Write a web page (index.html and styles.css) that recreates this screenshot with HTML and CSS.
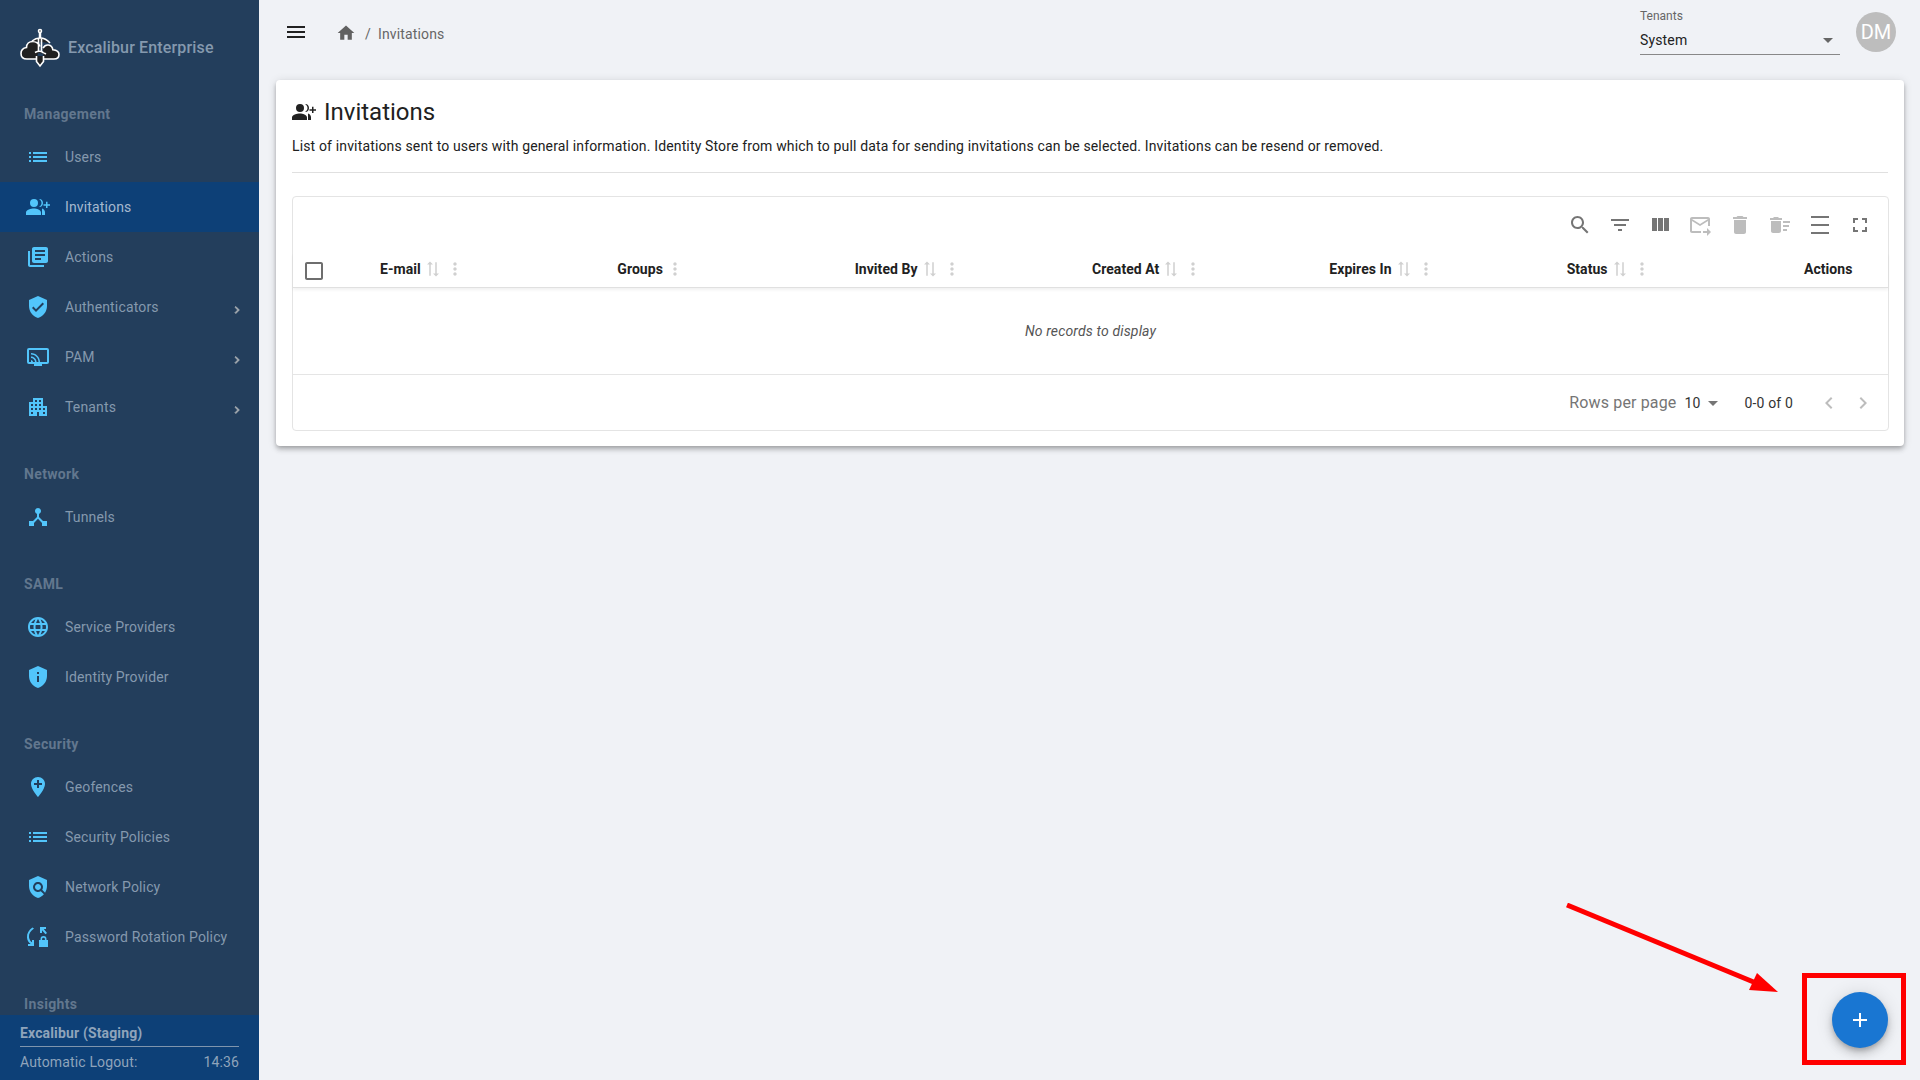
FILE: index.html
```html
<!DOCTYPE html>
<html lang="en">
<head>
<meta charset="utf-8">
<title>Invitations</title>
<link rel="stylesheet" href="styles.css">
</head>
<body>
<svg class="defs" aria-hidden="true">
<symbol id="i-list" viewBox="0 0 24 24"><path d="M3 13h2v-2H3v2zm0 4h2v-2H3v2zm0-8h2V7H3v2zm4 4h14v-2H7v2zm0 4h14v-2H7v2zM7 7v2h14V7H7z"/></symbol>
<symbol id="i-invite" viewBox="0 0 24 24"><path d="M8 12a4 4 0 1 0 0-8 4 4 0 0 0 0 8zm0 1.500c-3 0-8 1.300-8 4V20h15v-2.500c0-2.700-4.500-4-7-4zM13 4c1.500 1 2.500 2.400 2.500 4s-1 3-2.500 4c2.500.3 4-1.700 4-4s-1.500-4.300-4-4zM16 13.500c1.800.5 3 2 3 4V20h-3v-6.500zM20 13v-2.300h-2.500V9.200H20V6.800h1.500v2.400H24v1.500h-2.500V13z"/></symbol>
<symbol id="i-books" viewBox="0 0 24 24"><path d="M4 6H2v14c0 1.100.9 2 2 2h14v-2H4V6zm16-4H8c-1.100 0-2 .9-2 2v12c0 1.100.9 2 2 2h12c1.100 0 2-.9 2-2V4c0-1.100-.9-2-2-2zm-1 9H9V9h10v2zm-4 4H9v-2h6v2zm4-8H9V5h10v2z"/></symbol>
<symbol id="i-verified" viewBox="0 0 24 24"><path d="M12 1L3 5v6c0 5.550 3.840 10.740 9 12 5.160-1.260 9-6.450 9-12V5l-9-4zm-2 16l-4-4 1.410-1.410L10 14.170l6.590-6.590L18 9l-8 8z"/></symbol>
<symbol id="i-cast" viewBox="0 0 24 24"><path fill-rule="evenodd" d="M3 3h18a2 2 0 0 1 2 2v12a2 2 0 0 1-2 2H3a2 2 0 0 1-2-2V5a2 2 0 0 1 2-2zm0 2v12h18V5H3z"/><path d="M8 19h8v2H8zM5 17v-2c1 0 2 1 2 2H5zM5 13v-1.600c3 0 5.600 2.600 5.600 5.600H9c0-2.200-1.800-4-4-4zM5 9.500V8c5 0 9 4 9 9h-1.500c0-4.100-3.400-7.500-7.500-7.500z"/></symbol>
<symbol id="i-apt" viewBox="0 0 24 24"><path d="M17 11V3H7v4H3v14h8v-4h2v4h8V11h-4zM7 19H5v-2h2v2zm0-4H5v-2h2v2zm0-4H5V9h2v2zm4 4H9v-2h2v2zm0-4H9V9h2v2zm0-4H9V5h2v2zm4 8h-2v-2h2v2zm0-4h-2V9h2v2zm0-4h-2V5h2v2zm4 12h-2v-2h2v2zm0-4h-2v-2h2v2z"/></symbol>
<symbol id="i-hub" viewBox="0 0 24 24"><path d="M17 16l-4-4V8.820C14.160 8.400 15 7.300 15 6c0-1.660-1.340-3-3-3S9 4.340 9 6c0 1.300.84 2.400 2 2.820V12l-4 4H3v5h5v-3.050l4-4.200 4 4.200V21h5v-5h-4z"/></symbol>
<symbol id="i-globe" viewBox="0 0 24 24"><path d="M11.990 2C6.470 2 2 6.480 2 12s4.470 10 9.990 10C17.520 22 22 17.520 22 12S17.520 2 11.990 2zm6.930 6h-2.950c-.32-1.250-.78-2.450-1.380-3.560 1.840.63 3.370 1.910 4.330 3.560zM12 4.040c.83 1.200 1.480 2.530 1.910 3.960h-3.820c.43-1.430 1.080-2.760 1.910-3.960zM4.260 14C4.100 13.360 4 12.690 4 12s.1-1.360.26-2h3.380c-.08.66-.14 1.320-.14 2 0 .68.06 1.340.14 2H4.260zm.82 2h2.950c.32 1.250.78 2.450 1.380 3.560-1.840-.63-3.370-1.900-4.330-3.560zm2.950-8H5.080c.96-1.660 2.490-2.930 4.330-3.560C8.810 5.550 8.350 6.750 8.030 8zM12 19.960c-.83-1.200-1.480-2.530-1.910-3.960h3.820c-.43 1.430-1.080 2.760-1.910 3.960zM14.340 14H9.660c-.09-.66-.16-1.320-.16-2 0-.68.07-1.350.16-2h4.680c.09.65.16 1.320.16 2 0 .68-.07 1.340-.16 2zm.25 5.560c.6-1.110 1.060-2.310 1.380-3.560h2.950c-.96 1.650-2.490 2.930-4.330 3.560zM16.360 14c.08-.66.14-1.320.14-2 0-.68-.06-1.340-.14-2h3.380c.16.64.26 1.310.26 2s-.1 1.360-.26 2h-3.380z"/></symbol>
<symbol id="i-shield-info" viewBox="0 0 24 24"><path fill-rule="evenodd" d="M12 1L3 5v6c0 5.550 3.840 10.740 9 12 5.160-1.260 9-6.450 9-12V5l-9-4zm-1 6h2v2h-2V7zm0 4h2v6h-2v-6z"/></symbol>
<symbol id="i-addloc" viewBox="0 0 24 24"><path d="M12 2C8.140 2 5 5.140 5 9c0 5.250 7 13 7 13s7-7.750 7-13c0-3.860-3.140-7-7-7zm4 8h-3v3h-2v-3H8V8h3V5h2v3h3v2z"/></symbol>
<symbol id="i-policy" viewBox="0 0 24 24"><path d="M21 5l-9-4-9 4v6c0 5.550 3.840 10.740 9 12 2.300-.56 4.330-1.900 5.880-3.710l-3.120-3.120c-1.940 1.290-4.580 1.070-6.290-.64-1.950-1.950-1.950-5.120 0-7.070 1.950-1.950 5.120-1.950 7.070 0 1.710 1.710 1.920 4.350.64 6.290l2.900 2.900C20.290 15.690 21 13.380 21 11V5z"/><path d="M12 15c1.660 0 3-1.340 3-3s-1.340-3-3-3-3 1.340-3 3 1.340 3 3 3z"/></symbol>
<symbol id="i-rotate" viewBox="0 0 24 24"><path d="M8 3.500C4.500 6 2.600 8.800 3 12.200c.3 2.300 1.500 4 3 5.100V15h2v6H2v-2h2.700C2.500 17.300 1.200 15 1 12.400.7 8.400 2.800 5 6.400 2.500zM14 2h6v2h-2.200l3.200 4-1.500 1.200L16 5.300V8h-2zM17.500 11a3 3 0 0 1 3 3v1h1.500v7h-9v-7h1.500v-1a3 3 0 0 1 3-3zm0 1.700a1.400 1.400 0 0 0-1.400 1.400V15h2.800v-.9a1.400 1.400 0 0 0-1.400-1.400z"/></symbol>
<symbol id="i-chev" viewBox="0 0 24 24"><path d="M8.590 16.590L13.170 12 8.590 7.410 10 6l6 6-6 6z"/></symbol>
<symbol id="i-chev-l" viewBox="0 0 24 24"><path d="M15.410 7.410L14 6l-6 6 6 6 1.410-1.410L10.830 12z"/></symbol>
<symbol id="i-menu" viewBox="0 0 24 24"><path d="M3 18h18v-2H3v2zm0-5h18v-2H3v2zm0-7v2h18V6H3z"/></symbol>
<symbol id="i-home" viewBox="0 0 24 24"><path d="M10 20v-6h4v6h5v-8h3L12 3 2 12h3v8z"/></symbol>
<symbol id="i-drop" viewBox="0 0 24 24"><path d="M7 10l5 5 5-5z"/></symbol>
<symbol id="i-search" viewBox="0 0 24 24"><path d="M15.500 14h-.79l-.28-.27C15.410 12.590 16 11.110 16 9.500 16 5.910 13.090 3 9.500 3S3 5.910 3 9.500 5.910 16 9.500 16c1.610 0 3.090-.59 4.230-1.570l.27.28v.79l5 4.990L20.490 19l-4.990-5zm-6 0C7.010 14 5 11.990 5 9.500S7.010 5 9.500 5 14 7.010 14 9.500 11.990 14 9.500 14z"/></symbol>
<symbol id="i-filter" viewBox="0 0 24 24"><path d="M10 18h4v-2h-4v2zM3 6v2h18V6H3zm3 7h12v-2H6v2z"/></symbol>
<symbol id="i-cols" viewBox="0 0 24 24"><path d="M10 18h5V5h-5v13zm-6 0h5V5H4v13zM16 5v13h5V5h-5z"/></symbol>
<symbol id="i-mail" viewBox="0 0 24 24"><path d="M20 4H4c-1.100 0-2 .9-2 2v12c0 1.100.9 2 2 2h9v-2H4V8l8 5 8-5v5h2V6c0-1.100-.9-2-2-2zm-8 7L4 6h16l-8 5zm7 4l4 4-4 4v-3h-4v-2h4v-3z"/></symbol>
<symbol id="i-trash" viewBox="0 0 24 24"><path d="M6 19c0 1.100.9 2 2 2h8c1.100 0 2-.9 2-2V7H6v12zM19 4h-3.500l-1-1h-5l-1 1H5v2h14V4z"/></symbol>
<symbol id="i-sweep" viewBox="0 0 24 24"><path d="M15 16h4v2h-4zm0-8h7v2h-7zm0 4h6v2h-6zM3 18c0 1.100.9 2 2 2h6c1.100 0 2-.9 2-2V8H3v10zM14 5h-3l-1-1H6L5 5H2v2h12z"/></symbol>
<symbol id="i-density" viewBox="0 0 24 24"><path d="M3 3h18v2H3zM3 19h18v2H3zM3 11h18v2H3z"/></symbol>
<symbol id="i-full" viewBox="0 0 24 24"><path d="M7 14H5v5h5v-2H7v-3zm-2-4h2V7h3V5H5v5zm12 7h-3v2h5v-5h-2v3zM14 5v2h3v3h2V5h-5z"/></symbol>
<symbol id="i-sort" viewBox="0 0 24 24"><path d="M8 2L4 6h3v15h2V6h3L8 2zM16 22l4-4h-3V3h-2v15h-3l4 4z"/></symbol>
<symbol id="i-more" viewBox="0 0 24 24"><path d="M12 8c1.100 0 2-.9 2-2s-.9-2-2-2-2 .9-2 2 .9 2 2 2zm0 2c-1.100 0-2 .9-2 2s.9 2 2 2 2-.9 2-2-.9-2-2-2zm0 6c-1.100 0-2 .9-2 2s.9 2 2 2 2-.9 2-2-.9-2-2-2z"/></symbol>
<symbol id="i-box" viewBox="0 0 24 24"><path d="M19 5v14H5V5h14m0-2H5c-1.100 0-2 .9-2 2v14c0 1.100.9 2 2 2h14c1.100 0 2-.9 2-2V5c0-1.100-.9-2-2-2z"/></symbol>
<symbol id="i-add" viewBox="0 0 24 24"><path d="M19 13h-6v6h-2v-6H5v-2h6V5h2v6h6v2z"/></symbol>
</svg>

<div class="app">
  <aside class="sidebar">
    <div class="brand">
      <svg class="logo" viewBox="0 0 40 40" fill="none" stroke="#fff" stroke-width="1.600">
        <path d="M20 18.500c-1.500-3.500-4.500-5-7-5-4 0-6.500 2.500-6.500 6C3 20 1 22.500 1 25.500 1 29 3.500 31 7 31h9.500"/>
        <path d="M23 20c1.500-2.500 3.500-3.300 5.500-3 2.500.4 4 2.400 4.300 4.700 3.500.3 6.200 2.100 6.200 4.800 0 2.800-2.200 4.500-5 4.500H23.500"/>
        <path d="M16.500 28v5.500L20 38l3.500-4.500V28"/>
        <path d="M18.500 10v14M21.500 10v14M12 13c2.500-2 5-3 8-3s7 1.500 10 5"/>
        <path d="M15 24.500c3-1.500 6-1.500 8 0 1 .8 2 1 3 1.500"/>
        <circle cx="20" cy="3" r="1.500"/>
        <path d="M20 4.500V10" stroke-width="2.500"/>
      </svg>
      <span class="brand-name">Excalibur Enterprise</span>
    </div>
    <nav class="nav">
      <h3 class="nav-head">Management</h3>
      <a class="nav-item"><svg class="nav-ico"><use href="#i-list"/></svg><span>Users</span></a>
      <a class="nav-item active"><svg class="nav-ico"><use href="#i-invite"/></svg><span>Invitations</span></a>
      <a class="nav-item"><svg class="nav-ico"><use href="#i-books"/></svg><span>Actions</span></a>
      <a class="nav-item"><svg class="nav-ico"><use href="#i-verified"/></svg><span>Authenticators</span><svg class="nav-chev"><use href="#i-chev"/></svg></a>
      <a class="nav-item"><svg class="nav-ico"><use href="#i-cast"/></svg><span>PAM</span><svg class="nav-chev"><use href="#i-chev"/></svg></a>
      <a class="nav-item"><svg class="nav-ico"><use href="#i-apt"/></svg><span>Tenants</span><svg class="nav-chev"><use href="#i-chev"/></svg></a>
      <h3 class="nav-head">Network</h3>
      <a class="nav-item"><svg class="nav-ico"><use href="#i-hub"/></svg><span>Tunnels</span></a>
      <h3 class="nav-head">SAML</h3>
      <a class="nav-item"><svg class="nav-ico"><use href="#i-globe"/></svg><span>Service Providers</span></a>
      <a class="nav-item"><svg class="nav-ico"><use href="#i-shield-info"/></svg><span>Identity Provider</span></a>
      <h3 class="nav-head">Security</h3>
      <a class="nav-item"><svg class="nav-ico"><use href="#i-addloc"/></svg><span>Geofences</span></a>
      <a class="nav-item"><svg class="nav-ico"><use href="#i-list"/></svg><span>Security Policies</span></a>
      <a class="nav-item"><svg class="nav-ico"><use href="#i-policy"/></svg><span>Network Policy</span></a>
      <a class="nav-item"><svg class="nav-ico"><use href="#i-rotate"/></svg><span>Password Rotation Policy</span></a>
      <h3 class="nav-head nav-head-last">Insights</h3>
    </nav>
    <footer class="side-foot">
      <div class="foot-name">Excalibur (Staging)</div>
      <div class="foot-row"><span>Automatic Logout:</span><span>14:36</span></div>
    </footer>
  </aside>

  <main class="main">
    <header class="topbar">
      <svg class="burger"><use href="#i-menu"/></svg>
      <div class="crumbs">
        <svg class="home"><use href="#i-home"/></svg>
        <span class="sep">/</span>
        <span>Invitations</span>
      </div>
      <div class="tenant">
        <label class="tenant-label">Tenants</label>
        <div class="tenant-val"><span>System</span><svg class="tenant-drop"><use href="#i-drop"/></svg></div>
      </div>
      <div class="avatar">DM</div>
    </header>

    <section class="card">
      <h1 class="title"><svg class="title-ico"><use href="#i-invite"/></svg>Invitations</h1>
      <p class="desc">List of invitations sent to users with general information. Identity Store from which to pull data for sending invitations can be selected. Invitations can be resend or removed.</p>
      <hr class="rule">
      <div class="table">
        <div class="toolbar">
          <svg class="tool"><use href="#i-search"/></svg>
          <svg class="tool"><use href="#i-filter"/></svg>
          <svg class="tool"><use href="#i-cols"/></svg>
          <svg class="tool off"><use href="#i-mail"/></svg>
          <svg class="tool off"><use href="#i-trash"/></svg>
          <svg class="tool off"><use href="#i-sweep"/></svg>
          <svg class="tool"><use href="#i-density"/></svg>
          <svg class="tool"><use href="#i-full"/></svg>
        </div>
        <div class="thead">
          <div class="th"><svg class="check"><use href="#i-box"/></svg></div>
          <div class="th">E-mail<svg class="sort"><use href="#i-sort"/></svg><svg class="more"><use href="#i-more"/></svg></div>
          <div class="th">Groups<svg class="more no-sort"><use href="#i-more"/></svg></div>
          <div class="th">Invited By<svg class="sort"><use href="#i-sort"/></svg><svg class="more"><use href="#i-more"/></svg></div>
          <div class="th">Created At<svg class="sort"><use href="#i-sort"/></svg><svg class="more"><use href="#i-more"/></svg></div>
          <div class="th">Expires In<svg class="sort"><use href="#i-sort"/></svg><svg class="more"><use href="#i-more"/></svg></div>
          <div class="th">Status<svg class="sort"><use href="#i-sort"/></svg><svg class="more"><use href="#i-more"/></svg></div>
          <div class="th">Actions</div>
        </div>
        <div class="empty">No records to display</div>
        <div class="pager">
          <span class="rows-label">Rows per page</span>
          <span class="rows-val">10<svg class="rows-drop"><use href="#i-drop"/></svg></span>
          <span class="range">0-0 of 0</span>
          <svg class="page-btn"><use href="#i-chev-l"/></svg>
          <svg class="page-btn"><use href="#i-chev"/></svg>
        </div>
      </div>
    </section>
  </main>
</div>

<button class="fab" aria-label="Add"><svg class="fab-ico"><use href="#i-add"/></svg></button>
<div class="callout-box"></div>
<svg class="callout-arrow" viewBox="0 0 240 110">
  <path d="M1 2L190 80" stroke="#f00" stroke-width="5" fill="none"/>
  <path d="M191 70L212 89 183 87z" fill="#f00"/>
</svg>
</body>
</html>
```
FILE: styles.css
```css
* { box-sizing: border-box; }
html, body { margin: 0; height: 100%; overflow: hidden; }
body { font-family: Roboto, "Liberation Sans", sans-serif; background: #f0f2f6; color: #212121; }
.defs { position: absolute; width: 0; height: 0; }
svg { fill: currentColor; display: block; flex: none; }

.app { display: flex; height: 1080px; }

/* Sidebar */
.sidebar { width: 259px; flex: none; background: #233e5c; display: flex; flex-direction: column; overflow: hidden; }
.brand { display: flex; align-items: flex-start; gap: 8px; padding: 28px 0 0 20px; height: 93px; flex: none; }
.logo { width: 40px; height: 40px; }
.brand-name { font-size: 16px; font-weight: 500; color: #8599ae; line-height: 38px; letter-spacing: .15px; padding-top: 1px; }
.nav { flex: 1; min-height: 0; overflow: hidden; }
.nav-head { margin: 0; padding: 11px 0 8px 24px; font-size: 14px; font-weight: 700; color: #62778e; line-height: 20px; height: 39px; letter-spacing: .35px; }
.nav-head ~ .nav-head { margin-top: 21px; }
.nav-head-last { height: 31px; padding-bottom: 0; }
.nav-item { display: flex; align-items: center; height: 50px; padding-left: 26px; font-size: 14px; color: #8599ae; letter-spacing: .15px; }
.nav-item.active { background: #0d4077; color: #a5b9cf; }
.nav-ico { width: 24px; height: 24px; margin-right: 15px; color: #52c5fb; }
.nav-chev { width: 14px; height: 14px; color: #a6abb1; stroke: currentColor; stroke-width: 1.500; margin-left: auto; margin-right: 15px; position: relative; top: 3px; }
.side-foot { height: 65px; flex: none; background: #0d4077; padding: 0 20px; color: #8fa4bb; font-size: 14px; letter-spacing: .15px; }
.foot-name { font-weight: 700; height: 32px; line-height: 36px; border-bottom: 1px solid #7f95ad; }
.foot-row { display: flex; justify-content: space-between; line-height: 30px; }

/* Top bar */
.main { flex: 1; min-width: 0; padding: 0 16px 0 17px; }
.topbar { display: flex; align-items: center; height: 80px; position: relative; padding-bottom: 16px; }
.burger { width: 24px; height: 24px; color: #212121; margin-left: 8px; }
.crumbs { display: flex; align-items: center; margin-left: 28px; font-size: 14px; letter-spacing: .15px; color: #666; position: relative; top: 2px; }
.home { width: 20px; height: 20px; color: #616161; position: relative; top: -1px; }
.sep { margin: 0 7px 0 9px; }
.tenant { margin-left: auto; width: 200px; align-self: flex-start; padding-top: 9px; }
.tenant-label { display: block; font-size: 12px; color: #666; line-height: 14px; }
.tenant-val { display: flex; align-items: center; justify-content: space-between; height: 32px; font-size: 14px; letter-spacing: .15px; border-bottom: 1px solid #888; color: #222; }
.tenant-val span { position: relative; top: 1px; }
.tenant-drop { width: 24px; height: 24px; color: #666; position: relative; top: 1px; }
.avatar { width: 40px; height: 40px; border-radius: 50%; background: #bdbdbd; color: #fff; font-size: 20px; display: flex; align-items: center; justify-content: center; margin: 12px 8px 0 16px; align-self: flex-start; }

/* Card */
.card { height: 366px; background: #fff; border-radius: 4px; padding: 0 16px; box-shadow: 0 2px 4px -1px rgba(0,0,0,.2), 0 4px 5px rgba(0,0,0,.14), 0 1px 10px rgba(0,0,0,.12); }
.title { margin: 0; display: flex; align-items: center; font-size: 24px; font-weight: 400; height: 56px; padding-top: 8px; line-height: 32px; color: #212121; }
.title-ico { width: 24px; height: 24px; margin-right: 8px; }
.desc { margin: 0; font-size: 14px; line-height: 20px; height: 36px; color: #212121; letter-spacing: .15px; }
.rule { margin: 0; border: 0; border-top: 1px solid #e0e0e0; }

.table { margin: 23px -1px 0 0; height: 235px; border: 1px solid #e4e4e4; border-radius: 4px; display: flex; flex-direction: column; }
.toolbar { display: flex; justify-content: flex-end; align-items: center; gap: 16px; height: 56px; padding-right: 16px; }
.tool { width: 24px; height: 24px; color: #757575; }
.tool.off { color: #bdbdbd; }
.thead { display: grid; grid-template-columns: 87px repeat(6, 1fr) 84px; height: 35px; border-bottom: 1px solid #e0e0e0; box-shadow: 0 2px 3px rgba(0,0,0,.06); }
.th { display: flex; align-items: center; font-size: 14px; font-weight: 700; letter-spacing: .05px; color: #212121; height: 24px; margin-top: 4px; }
.check { width: 24px; height: 24px; color: #6e6e6e; margin: 3px 0 0 9px; }
.sort { width: 18px; height: 18px; color: #d0d0d0; margin-left: 3px; }
.more { width: 20px; height: 20px; color: #d0d0d0; margin-left: 3px; }
.more.no-sort { margin-left: 2px; }
.empty { height: 87px; display: flex; align-items: center; justify-content: center; font-size: 14px; font-style: italic; letter-spacing: .15px; color: #555; border-bottom: 1px solid #e5e5e5; }
.pager { flex: 1; display: flex; align-items: center; justify-content: flex-end; padding-right: 13px; font-size: 14px; letter-spacing: .15px; }
.rows-label { font-size: 16px; color: #757575; margin-right: 8px; }
.rows-val { display: flex; align-items: center; color: #333; }
.rows-drop { width: 24px; height: 24px; color: #757575; }
.range { margin: 0 24px 0 20px; color: #333; }
.page-btn { width: 24px; height: 24px; color: #bdbdbd; margin-left: 10px; }
.page-btn:first-of-type { margin-left: 0; }

/* Floating action and annotation */
.fab { position: absolute; left: 1832px; top: 992px; width: 56px; height: 56px; border: 0; padding: 0; border-radius: 50%; background: #1976d2; color: #fff; display: flex; align-items: center; justify-content: center; box-shadow: 0 3px 5px -1px rgba(0,0,0,.2), 0 6px 10px rgba(0,0,0,.14), 0 1px 18px rgba(0,0,0,.12); }
.fab-ico { width: 24px; height: 24px; }
.callout-box { position: absolute; left: 1802px; top: 973px; width: 104px; height: 92px; border: 5px solid #f00; }
.callout-arrow { position: absolute; left: 1566px; top: 903px; width: 240px; height: 110px; }
```
